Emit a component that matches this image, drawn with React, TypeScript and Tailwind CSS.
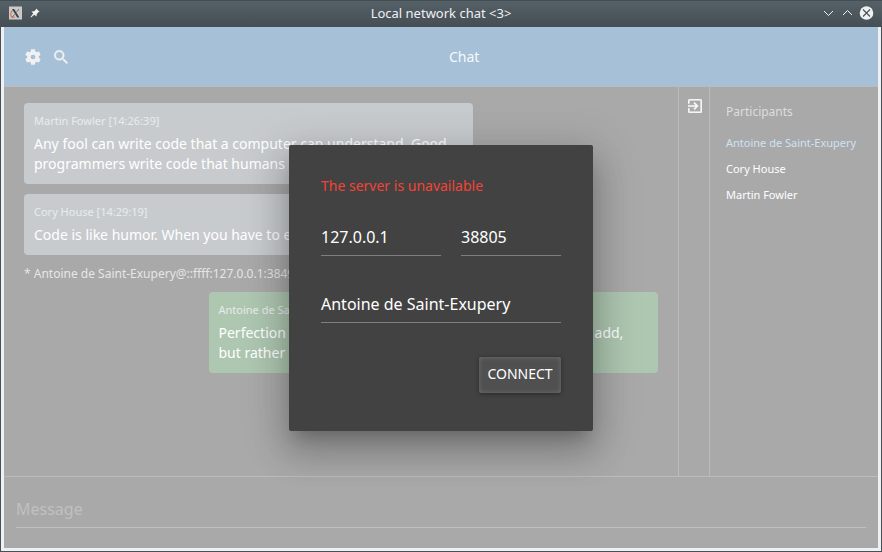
import React from "react";

type MessageProps = { author: string; time: string; lines: string[]; own?: boolean };

function Message({ author, time, lines, own }: MessageProps) {
  return (
    <div
      className={`rounded-[4px] px-2.5 pt-2 pb-2.5 ${
        own ? "w-[449.5px] self-end bg-[#aec7b1]" : "w-[449px] bg-[#c7cbce]"
      }`}
    >
      <div className="h-[23px] pt-0.5 text-[11px] leading-[16px] text-[#e9ebec]">
        {author} [{time}]
      </div>
      {lines.map((line) => (
        <div key={line} className="h-5 text-[14px] leading-5 whitespace-nowrap text-white">
          {line}
        </div>
      ))}
    </div>
  );
}

function TitleBar() {
  return (
    <div className="relative flex h-[27px] shrink-0 items-center border-t border-[#434d54] bg-linear-to-b from-[#566067] to-[#454e55] px-2">
      <svg width="14" height="14" viewBox="0 0 14 14" className="relative -top-px">
        <rect x="1" y="0.5" width="13" height="13" fill="#c9cbcc" />
        <path d="M4.6 4.4C2.4 6 2.2 9 3.6 10.8c1.2.9 2.4.6 3.4.2" fill="none" stroke="#e2775a" strokeWidth="1.2" />
        <path d="M10.5 4.2c1.3 1.6 1.5 3.6.6 5.4" fill="none" stroke="#ddb89a" strokeWidth="1" />
        <path d="M4 3h2.2l5.2 8.4H9.2z" fill="#3a4044" />
        <path d="M11 3 8.2 6.4M6.6 8.4 4 11.4" stroke="#5c6266" strokeWidth="0.9" />
      </svg>
      <svg width="10" height="10" viewBox="0 0 10 10" className="relative -top-px ml-2">
        <path d="M6.2.5 9.5 3.8 8.4 4.2 6.7 6 6.5 8.5 4.3 6.7 1 9.4.5 9 3.2 5.6 1.5 3.6 4 3.3 5.8 1.7z" fill="#f2f3f3" />
      </svg>
      <div className="absolute inset-x-0 top-0 text-center text-[13px] leading-[25px] text-[#eff0f1]">
        Local network chat &lt;3&gt;
      </div>
      <svg width="54" height="16" viewBox="0 0 54 16" className="relative -top-px ml-auto" fill="none">
        <path d="M4 6l4.5 4.5L13 6M23 10l4.5-4.5L32 10" stroke="#eff0f1" />
        <circle cx="46.5" cy="8" r="6.8" fill="#eff0f1" />
        <path d="m43 4.5 7 7m0-7-7 7" stroke="#464f56" strokeWidth="1.1" />
      </svg>
    </div>
  );
}

function Field({ value, width }: { value: string; width: string }) {
  return (
    <div className={`${width} h-[33px] border-b border-[#7e7e7e] pt-0.5 text-[16px] leading-6 text-white`}>
      {value}
    </div>
  );
}

function ConnectDialog() {
  return (
    <div className="absolute top-[145px] left-[289px] flex h-[286px] w-[304px] flex-col rounded-[2px] bg-[#424242] px-8 pt-[31px] shadow-[0_11px_15px_-7px_rgba(0,0,0,0.2),0_20px_34px_3px_rgba(0,0,0,0.18),0_9px_46px_8px_rgba(0,0,0,0.13)]">
      <div className="text-[14px] leading-[19px] text-[#f44336]">The server is unavailable</div>
      <div className="mt-7 flex gap-5">
        <Field value="127.0.0.1" width="w-[120px]" />
        <Field value="38805" width="w-[100px]" />
      </div>
      <div className="mt-[34px] flex">
        <Field value="Antoine de Saint-Exupery" width="w-full" />
      </div>
      <button className="mt-[34px] h-9 w-[82px] self-end rounded-[2px] bg-[#505050] pb-0.5 text-[14px] leading-[34px] text-white shadow-[inset_0_0_5px_rgba(255,255,255,0.18),0_1px_4px_rgba(0,0,0,0.4)]">
        CONNECT
      </button>
    </div>
  );
}

export default function App() {
  return (
    <div className="relative flex h-[552px] w-[882px] flex-col overflow-hidden bg-[#475057] font-['Noto_Sans',sans-serif]">
      <TitleBar />
      <div className="mx-px mb-px flex min-h-0 flex-1 flex-col bg-[#eff0f1] px-[3px] pb-[3px]">
        <div className="flex min-h-0 flex-1 flex-col bg-[#a9a9a9]">
          <header className="flex h-[60px] shrink-0 items-center border-b border-[#bbbbbb] bg-[#a5c0d7] pl-[21px]">
            <svg width="16" height="16" viewBox="2.2 2.2 19.6 19.6" fill="#f1f1f1">
              <path d="M19.14 12.94c.04-.3.06-.61.06-.94 0-.32-.02-.64-.07-.94l2.03-1.58c.18-.14.23-.41.12-.61l-1.92-3.32c-.12-.22-.37-.29-.59-.22l-2.39.96c-.5-.38-1.03-.7-1.62-.94l-.36-2.54c-.04-.24-.24-.41-.48-.41h-3.84c-.24 0-.43.17-.47.41l-.36 2.54c-.59.24-1.13.57-1.62.94l-2.39-.96c-.22-.08-.47 0-.59.22L2.74 8.87c-.12.21-.08.47.12.61l2.03 1.58c-.05.3-.09.63-.09.94s.02.64.07.94l-2.03 1.58c-.18.14-.23.41-.12.61l1.92 3.32c.12.22.37.29.59.22l2.39-.96c.5.38 1.03.7 1.62.94l.36 2.54c.05.24.24.41.48.41h3.84c.24 0 .44-.17.47-.41l.36-2.54c.59-.24 1.13-.56 1.62-.94l2.39.96c.22.08.47 0 .59-.22l1.92-3.32c.12-.22.07-.47-.12-.61zM12 14.9a2.9 2.9 0 1 1 0-5.8 2.9 2.9 0 0 1 0 5.8z" />
            </svg>
            <svg width="14" height="14" viewBox="2.8 2.8 17.9 17.9" fill="#f1f1f1" stroke="#f1f1f1" strokeWidth="0.5" className="ml-[13px]">
              <path d="M15.5 14h-.79l-.28-.27A6.47 6.47 0 0 0 16 9.5 6.5 6.5 0 1 0 9.5 16c1.61 0 3.09-.59 4.23-1.57l.27.28v.79l5 4.99L20.49 19zm-6 0a4.5 4.5 0 1 1 0-9 4.5 4.5 0 0 1 0 9z" />
            </svg>
            <div className="ml-[381px] text-[14px] leading-5 text-[#f8f9fa]">Chat</div>
          </header>
          <div className="flex h-[390px] shrink-0 border-b border-[#bbbbbb]">
            <main className="flex w-[674px] flex-col px-5 pt-4">
              <Message
                author="Martin Fowler"
                time="14:26:39"
                lines={["Any fool can write code that a computer can understand. Good", "programmers write code that humans can"]}
              />
              <div className="h-2.5" />
              <Message author="Cory House" time="14:29:19" lines={["Code is like humor. When you have to explain it, it’s bad."]} />
              <div className="mt-[9px] mb-[9px] h-[19px] text-[12px] leading-5 text-[#e6e6e6]">
                * Antoine de Saint-Exupery@::ffff:127.0.0.1:3849
              </div>
              <Message
                own
                author="Antoine de Saint-Exupery"
                time="14:31:02"
                lines={["Perfection is achieved not when there is nothing more to add,", "but rather when there is nothing more"]}
              />
            </main>
            <div className="flex w-8 justify-center border-x border-[#bbbbbb] pt-3">
              <svg width="14" height="14" viewBox="3 3 18 18" fill="#f6f6f6" stroke="#f6f6f6" strokeWidth="0.3" className="ml-0.5">
                <path d="M10.09 15.59 11.5 17l5-5-5-5-1.41 1.41L12.67 11H3v2h9.67zM19 3H5a2 2 0 0 0-2 2v4h2V5h14v14H5v-4H3v4a2 2 0 0 0 2 2h14a2 2 0 0 0 2-2V5a2 2 0 0 0-2-2z" />
              </svg>
            </div>
            <aside className="flex flex-col pt-[15px] pl-4 text-[11px] leading-[26px] text-white">
              <div className="mb-2 text-[12px] leading-5 text-[#dddddd]">Participants</div>
              <div className="text-[#cde3f5]">Antoine de Saint-Exupery</div>
              <div>Cory House</div>
              <div>Martin Fowler</div>
            </aside>
          </div>
          <footer className="px-3 pt-5">
            <div className="h-[31px] border-b border-[#c0c0c0] text-[16px] leading-6 text-[#c0c0c0]">Message</div>
          </footer>
        </div>
      </div>
      <ConnectDialog />
    </div>
  );
}
